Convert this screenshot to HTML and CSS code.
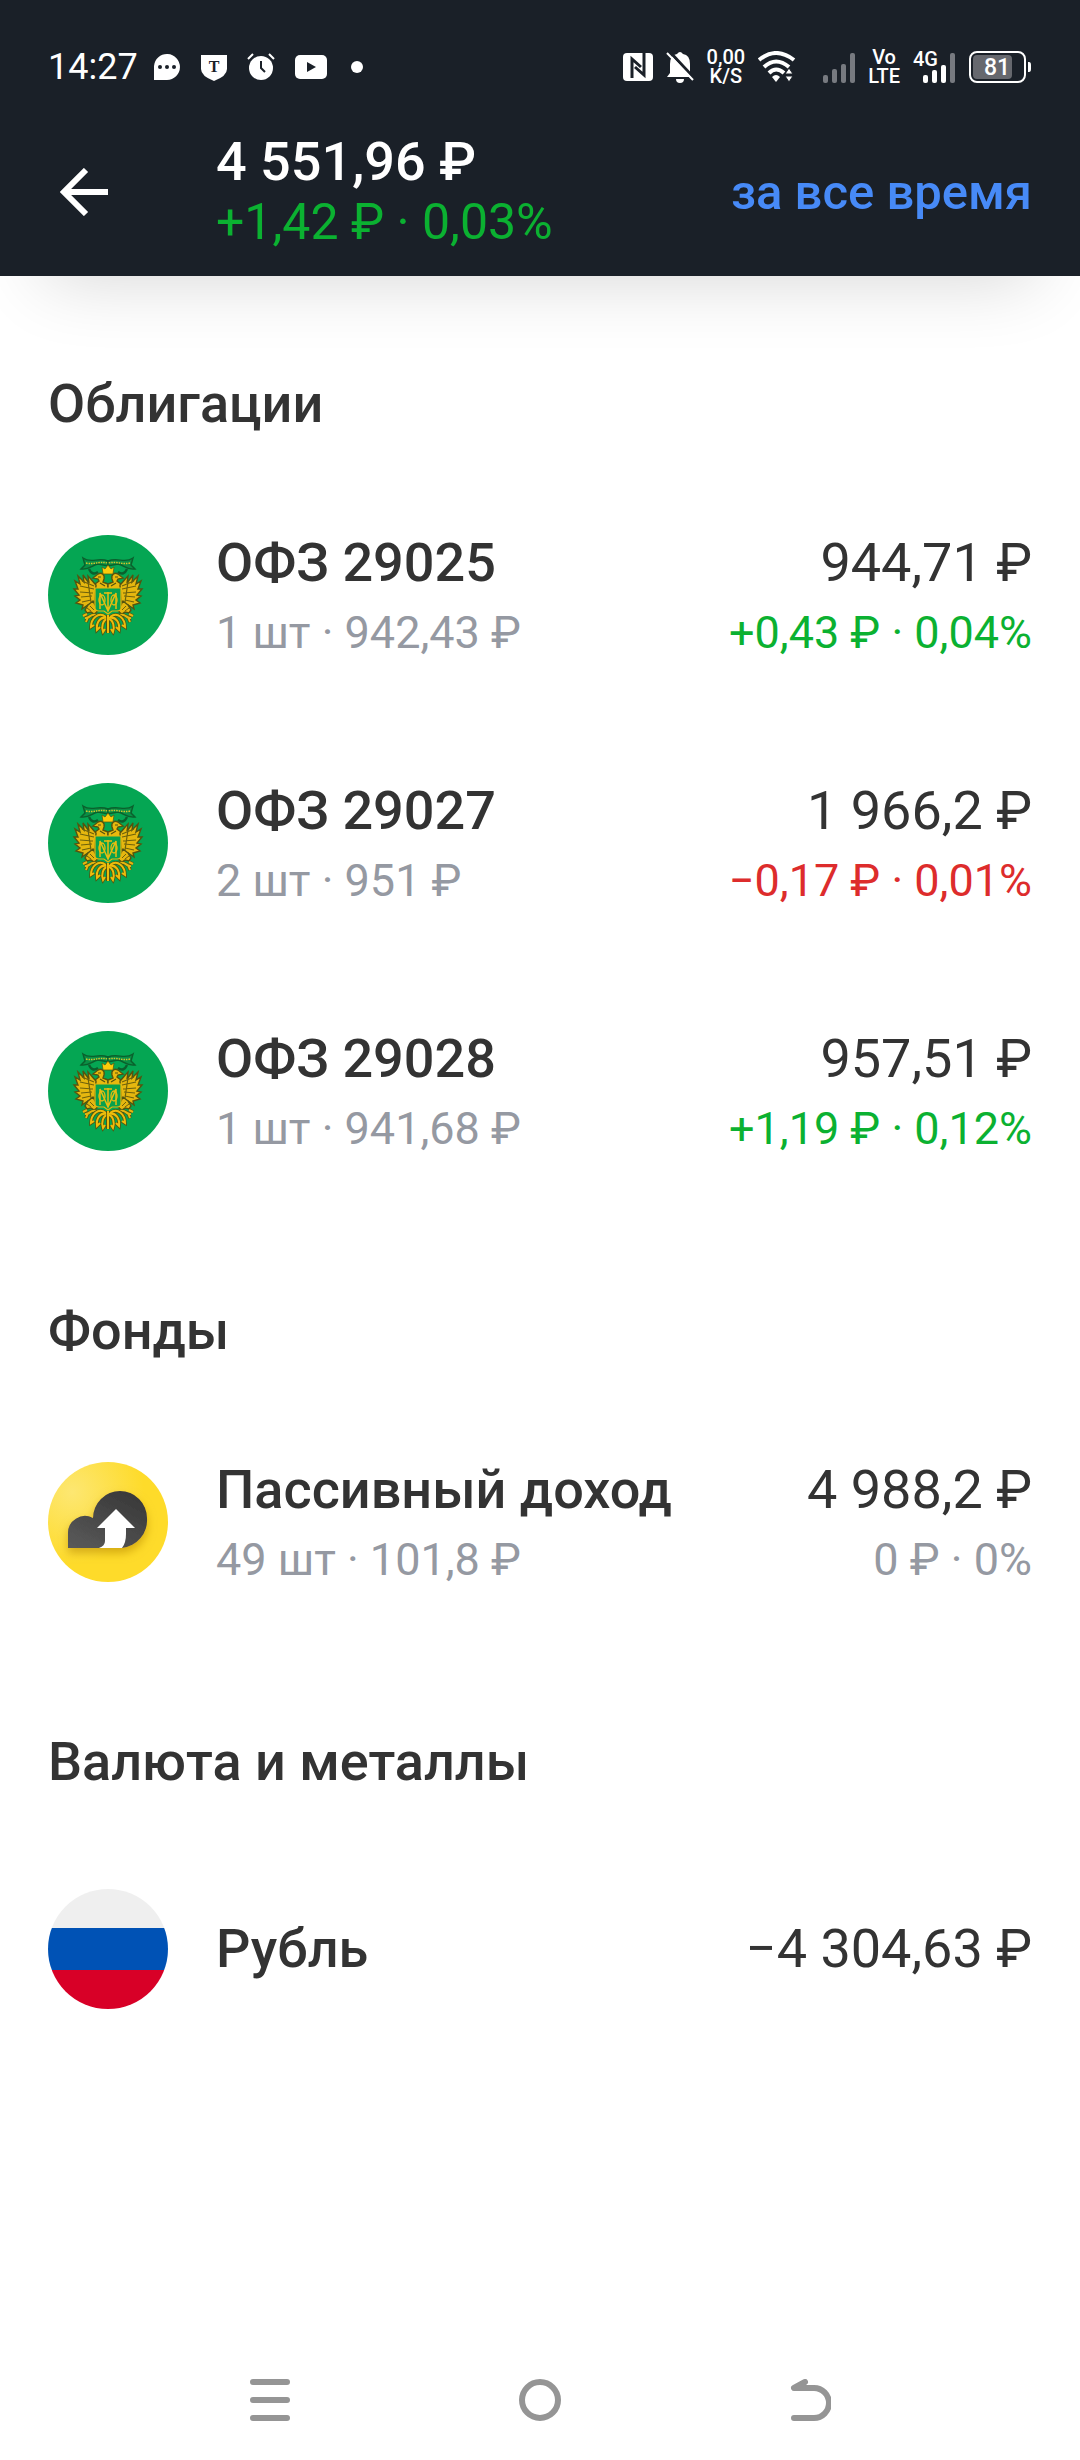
FILE: index.html
```
<!DOCTYPE html>
<html lang="ru">

<head>
    <meta charset="UTF-8">
    <meta name="viewport" content="width=device-width, initial-scale=1.0">
    <title>Портфель</title>
    <link rel="stylesheet" href="styles.css">
</head>

<body>
    <!-- общие символы -->
    <svg class="defs" width="0" height="0" aria-hidden="true">
        <defs>
            <!-- половина герба, вторая получается отражением -->
            <g id="emblem-half">
                <path d="M60 26 C50 22 43 29 35 23 L37 30 L33 34 C42 35 44 30 50 29 L60 31 Z" fill="#0a8f45" stroke="#0b5f2c" stroke-width="1.4" />
                <path d="M38 28 C46 30 50 26 60 28" fill="none" stroke="#d6c52c" stroke-width="1.4" stroke-dasharray="1.5 1" />
                <path d="M41 34 Q44 41 50 37" fill="none" stroke="#0b5f2c" stroke-width="2.4" />
                <!-- голова и шея -->
                <path d="M45 43 L50 39 C54 37 57 40 56 44 L55 47 L60 49 V54 H47 V49 L51 46 L50 44 Z" fill="#e9b90e" stroke="#54540f" stroke-width="1.4" />
                <path d="M50 42 H53 M52 48 L57 51" stroke="#54540f" stroke-width="1.2" />
                <!-- крыло -->
                <path d="M48 50 C45 47 43 44 40 41 L41 48 L35 40 L36 47 L30 41 L32 49 L27 46 L30 54 L26 54 L31 60 L27 61 L32 65 L28 68 L35 70 L34 74 L40 70 L42 73 L47 66 Z" fill="#e5b70f" stroke="#54540f" stroke-width="1.4" />
                <path d="M46 51 L34 46 M46 54 L32 51 M45 58 L32 57 M44 61 L33 62 M43 65 L34 67 M40 47 L43 67" fill="none" stroke="#6d610c" stroke-width="1.2" />
                <!-- лапа -->
                <path d="M45 66 L40 70 L37 75 L39 78 L43 77 L46 79 L49 77 L48 72 Z" fill="#e5b70f" stroke="#54540f" stroke-width="1.4" />
                <path d="M42 71 L46 75 M39 73 L43 76" stroke="#6d610c" />
                <path d="M48 80 C42 78 42 84 37 83 M39 79 L35 81 M40 82 L38 87" fill="none" stroke="#54540f" stroke-width="3.4" />
                <path d="M48 80 C42 78 42 84 37 83 M39 79 L35 81 M40 82 L38 87" fill="none" stroke="#e5b70f" stroke-width="2" />
                <!-- хвост -->
                <path d="M58 82 C50 76 43 84 43 92 L46 90 M59 83 C52 81 48 88 49 95 L52 92 M59 84 C55 85 53 92 55 97 L57 94 M60 80 V98" fill="none" stroke="#54540f" stroke-width="3.6" />
                <path d="M58 82 C50 76 43 84 43 92 L46 90 M59 83 C52 81 48 88 49 95 L52 92 M59 84 C55 85 53 92 55 97 L57 94 M60 80 V98" fill="none" stroke="#edbd0b" stroke-width="2" />
            </g>
            <symbol id="emblem" viewBox="0 0 120 120">
                <circle cx="60" cy="60" r="60" fill="#05a653" />
                <use href="#emblem-half" />
                <use href="#emblem-half" transform="translate(120 0) scale(-1 1)" />
                <path d="M55 39 L54 32 L57 34 L60 30 L63 34 L66 32 L65 39 Z" fill="#fccc0a" stroke="#54540f" stroke-width="0.7" />
                <path d="M47 53 H73 V73 Q73 76 69 76 H64 L60 79 L56 76 H51 Q47 76 47 73 Z" fill="#08a14d" stroke="#e5b70f" stroke-width="1.2" />
                <path d="M52 74 V58 L60 76 L68 58 V74 M60 57 V75 M56 58 H64" fill="none" stroke="#e9bd10" stroke-width="1.5" />
                <ellipse cx="54" cy="65" rx="3" ry="5" fill="none" stroke="#e9bd10" stroke-width="1.3" />
                <ellipse cx="66" cy="65" rx="3" ry="5" fill="none" stroke="#e9bd10" stroke-width="1.3" />
            </symbol>
        </defs>
    </svg>

    <header class="header">
        <!-- строка состояния -->
        <div class="status-bar">
            <div class="status-left">
                <span class="clock">14:27</span>
                <svg width="28" height="30" viewBox="0 0 28 30">
                    <path d="M1 28 V14 A13 13 0 1 1 14 28 Z" fill="#fff" />
                    <g fill="#1a2028"><circle cx="7" cy="15" r="2" /><circle cx="14" cy="15" r="2" /><circle cx="21" cy="15" r="2" /></g>
                </svg>
                <svg width="28" height="30" viewBox="0 0 28 30">
                    <path d="M1 3 H27 V17 Q27 24 14 29 Q1 24 1 17 Z" fill="#fff" />
                    <text class="shield-letter" x="14" y="20" text-anchor="middle">T</text>
                </svg>
                <svg width="28" height="30" viewBox="0 0 28 30">
                    <circle cx="14" cy="16" r="12" fill="#fff" />
                    <path d="M1 7 L6 2 M27 7 L22 2" stroke="#fff" stroke-width="2" />
                    <path d="M14 9 V16 L18 20" fill="none" stroke="#1a2028" stroke-width="2" />
                </svg>
                <svg width="34" height="30" viewBox="0 0 34 30">
                    <rect x="1" y="3" width="32" height="24" rx="5" fill="#fff" />
                    <path d="M13 10 L22 15 L13 20 Z" fill="#1a2028" />
                </svg>
                <span class="dot"></span>
            </div>
            <div class="status-right">
                <svg width="30" height="28" viewBox="0 0 30 28">
                    <rect width="30" height="28" rx="4" fill="#fff" />
                    <path d="M9 25 V6 L18 14 M21 0 V22 L12 14" fill="none" stroke="#1a2028" stroke-width="3" />
                </svg>
                <svg width="28" height="34" viewBox="0 0 28 34">
                    <path d="M1 27 L4 23 V14 Q4 5 11 4 Q14 0 17 4 Q24 5 24 14 V23 L27 27 Z M10 29 H18 Q18 33 14 33 Q10 33 10 29" fill="#fff" />
                    <path d="M3 1 L29 29" stroke="#1a2028" stroke-width="3" />
                    <path d="M1 3 L27 30" stroke="#fff" stroke-width="2" />
                </svg>
                <div class="tiny">
                    <p>0,00</p>
                    <p>K/S</p>
                </div>
                <svg class="wifi" width="38" height="32" viewBox="0 0 38 32">
                    <g fill="none" stroke="#fff" stroke-width="4">
                        <path d="M1 9 Q18 -5 36 9" />
                        <path d="M6 16 Q18 5 31 16" />
                        <path d="M11 22 Q18 15 26 22" />
                    </g>
                    <path d="M14 26 Q18 22 22 26 L18 31 Z" fill="#fff" />
                    <path d="M27 23 L31 17 L35 23 Z M27 25 L31 31 L35 25 Z" fill="#fff" stroke="#1a2028" stroke-width="1" />
                </svg>
                <svg width="32" height="32" viewBox="0 0 32 32" fill="#777a80">
                    <rect y="24" width="5" height="8" rx="2" /><rect x="9" y="18" width="5" height="14" rx="2" />
                    <rect x="18" y="13" width="5" height="19" rx="2" /><rect x="27" y="2" width="5" height="30" rx="2" />
                </svg>
                <div class="tiny">
                    <p>Vo</p>
                    <p>LTE</p>
                </div>
                <svg class="mobile" width="42" height="36" viewBox="0 0 42 36" fill="#fff">
                    <text class="net" x="0" y="17">4G</text>
                    <rect x="10" y="26" width="5" height="8" rx="2" /><rect x="19" y="21" width="5" height="13" rx="2" />
                    <rect x="28" y="16" width="5" height="18" rx="2" /><rect x="37" y="4" width="5" height="30" rx="2" fill="#777a80" />
                </svg>
                <svg width="64" height="34" viewBox="0 0 64 34">
                    <rect x="2" y="2" width="55" height="30" rx="7" fill="none" stroke="#fff" stroke-width="2" />
                    <rect x="5" y="5" width="39" height="24" rx="4" fill="#66686e" />
                    <path d="M60 12 H61 Q63 12 63 15 V19 Q63 22 61 22 H60 Z" fill="#fff" />
                    <text class="charge" x="29" y="25" text-anchor="middle">81</text>
                </svg>
            </div>
        </div>

        <!-- итог по портфелю -->
        <div class="app-bar">
            <button class="back-btn" aria-label="Назад">
                <svg width="48" height="48" viewBox="0 0 48 48" fill="none" stroke="#fff" stroke-width="6">
                    <path d="M48 24 H5 M26 2 L4 24 L26 46" />
                </svg>
            </button>
            <div class="total">
                <h1>4 551,96 ₽</h1>
                <p class="up">+1,42 ₽ · 0,03%</p>
            </div>
            <button class="period-btn">за все время</button>
        </div>
    </header>

    <main class="content">
        <section>
            <h2>Облигации</h2>
            <ul>
                <li class="row">
                    <svg class="logo"><use href="#emblem" /></svg>
                    <div class="info">
                        <h3>ОФЗ 29025</h3>
                        <p>1 шт · 942,43 ₽</p>
                    </div>
                    <div class="price">
                        <strong>944,71 ₽</strong>
                        <p class="up">+0,43 ₽ · 0,04%</p>
                    </div>
                </li>
                <li class="row">
                    <svg class="logo"><use href="#emblem" /></svg>
                    <div class="info">
                        <h3>ОФЗ 29027</h3>
                        <p>2 шт · 951 ₽</p>
                    </div>
                    <div class="price">
                        <strong>1 966,2 ₽</strong>
                        <p class="down">−0,17 ₽ · 0,01%</p>
                    </div>
                </li>
                <li class="row">
                    <svg class="logo"><use href="#emblem" /></svg>
                    <div class="info">
                        <h3>ОФЗ 29028</h3>
                        <p>1 шт · 941,68 ₽</p>
                    </div>
                    <div class="price">
                        <strong>957,51 ₽</strong>
                        <p class="up">+1,19 ₽ · 0,12%</p>
                    </div>
                </li>
            </ul>
        </section>

        <section>
            <h2>Фонды</h2>
            <ul>
                <li class="row">
                    <svg class="logo" viewBox="0 0 120 120">
                        <defs>
                            <radialGradient id="gold" cx="0.2" cy="0.25" r="0.6">
                                <stop offset="0" stop-color="#fde772" />
                                <stop offset="1" stop-color="#fedb2a" />
                            </radialGradient>
                            <linearGradient id="cloud" x1="0" y1="1" x2="0.7" y2="0">
                                <stop offset="0" stop-color="#5a5a5a" />
                                <stop offset="1" stop-color="#3a3a3a" />
                            </linearGradient>
                            <filter id="cloud-shadow" x="-20%" y="-20%" width="140%" height="150%">
                                <feDropShadow dx="0" dy="5" stdDeviation="5" flood-color="#b98a00" flood-opacity="0.6" />
                            </filter>
                        </defs>
                        <circle cx="60" cy="60" r="60" fill="url(#gold)" />
                        <path d="M20 86 V72 A17 17 0 0 1 45 56 A27 27 0 0 1 99 56 A28 28 0 0 1 74 86 Z" fill="url(#cloud)" filter="url(#cloud-shadow)" />
                        <path d="M68 47 L87 66 H78 V72 Q78 81 74 86 H51 Q57 84 57 79 V66 H49 Z" fill="#fff" />
                    </svg>
                    <div class="info">
                        <h3>Пассивный доход</h3>
                        <p>49 шт · 101,8 ₽</p>
                    </div>
                    <div class="price">
                        <strong>4 988,2 ₽</strong>
                        <p>0 ₽ · 0%</p>
                    </div>
                </li>
            </ul>
        </section>

        <section>
            <h2>Валюта и металлы</h2>
            <ul>
                <li class="row">
                    <div class="logo flag"></div>
                    <div class="info">
                        <h3>Рубль</h3>
                    </div>
                    <div class="price">
                        <strong>−4 304,63 ₽</strong>
                    </div>
                </li>
            </ul>
        </section>
    </main>

    <!-- системная навигация -->
    <nav class="nav-bar">
        <button aria-label="Меню">
            <svg width="42" height="42" viewBox="0 0 42 42"><path d="M4 3 H38 M4 21 H38 M4 39 H38" /></svg>
        </button>
        <button aria-label="Домой">
            <svg width="42" height="42" viewBox="0 0 42 42"><circle cx="21" cy="21" r="18" /></svg>
        </button>
        <button aria-label="Назад">
            <svg width="42" height="42" viewBox="0 0 42 42"><path d="M16 3 L5 9 H25 A15 15 0 0 1 25 39 H5" /></svg>
        </button>
    </nav>
</body>

</html>
```
FILE: styles.css
```
/* 기본 */
* {
    margin: 0;
    padding: 0;
    box-sizing: border-box;
}

body {
    font-family: Roboto, 'Noto Sans', sans-serif;
    background-color: #fff;
    color: #333;
    min-height: 100vh;
    display: flex;
    flex-direction: column;
}

ul {
    list-style: none;
}

button {
    background: none;
    border: none;
    font-family: inherit;
    cursor: pointer;
}

svg {
    display: block;
    flex-shrink: 0;
}

.defs {
    position: absolute;
}

/* Шапка */
.header {
    background-color: #1a2028;
    color: #fff;
    box-shadow: 0 48px 72px -44px rgba(0, 0, 0, 0.16);
}

/* Строка состояния */
.status-bar {
    display: flex;
    justify-content: space-between;
    align-items: center;
    height: 134px;
    padding: 0 48px;
}

.status-left {
    display: flex;
    align-items: center;
    gap: 19px;
}

.status-right {
    display: flex;
    align-items: center;
    gap: 13px;
}

.clock {
    font-size: 36px;
    margin-right: -4px;
}

.dot {
    width: 12px;
    height: 12px;
    margin-left: 4px;
    border-radius: 50%;
    background-color: #fff;
}

.tiny {
    font-size: 20px;
    font-weight: 500;
    line-height: 19px;
    text-align: center;
}

.wifi {
    margin-right: 14px;
}

.shield-letter {
    font: bold 16px 'Liberation Serif', serif;
    fill: #1a2028;
}

.net {
    font-size: 20px;
    font-weight: 500;
}

.charge {
    font-size: 23px;
    font-weight: 500;
    fill: #fff;
}

/* Верхняя панель */
.app-bar {
    display: flex;
    align-items: center;
    height: 142px;
    padding: 0 48px 26px;
}

.back-btn {
    width: 168px;
    padding-left: 12px;
}

.total {
    flex: 1;
}

h1 {
    font-size: 54px;
    font-weight: 500;
    line-height: 60px;
}

.total p {
    font-size: 50px;
    line-height: 60px;
}

.period-btn {
    font-size: 49px;
    font-weight: 500;
    color: #478af7;
}

/* Список */
.content {
    flex: 1;
    padding: 12px 48px 0;
}

section {
    padding-top: 84px;
}

h2,
h3 {
    font-size: 54px;
    font-weight: 500;
    line-height: 64px;
}

h2 {
    margin-bottom: 35px;
}

.row {
    display: flex;
    align-items: center;
    padding: 60px 0;
}

.logo {
    width: 120px;
    height: 120px;
    margin-right: 48px;
    flex-shrink: 0;
}

.flag {
    border-radius: 50%;
    background: linear-gradient(#efefef 39px, #0052b5 39px, #0052b5 81px, #d80027 81px);
}

.info {
    flex: 1;
}

.row p {
    margin-top: 12px;
    font-size: 45px;
    line-height: 52px;
    color: #9599a2;
}

.price {
    text-align: right;
}

.price strong {
    display: block;
    font-size: 54px;
    font-weight: 400;
    line-height: 64px;
}

.total .up,
.row .up {
    color: #0bb131;
}

.row .down {
    color: #dd2c2c;
}

/* Нижняя навигация */
.nav-bar {
    display: grid;
    grid-template-columns: repeat(3, 1fr);
    align-items: center;
    justify-items: center;
    height: 120px;
    padding: 0 135px;
}

.nav-bar svg {
    fill: none;
    stroke: #959595;
    stroke-width: 6;
    stroke-linecap: round;
    stroke-linejoin: round;
}
```
